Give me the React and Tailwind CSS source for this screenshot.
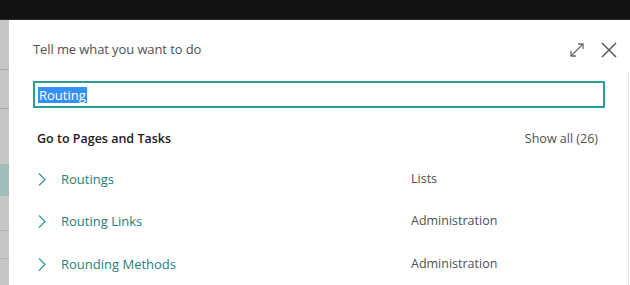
import React from "react";

const rows = [
  { name: "Routings", group: "Lists" },
  { name: "Routing Links", group: "Administration" },
  { name: "Rounding Methods", group: "Administration" },
];

const Chevron = () => (
  <svg width="10" height="15" viewBox="0 0 10 15" fill="none">
    <path d="M2 1.5 L8 7.5 L2 13.5" stroke="#3a9a9a" strokeWidth="1.3" />
  </svg>
);

const App = () => {
  return (
    <div
      className="w-[630px] h-[285px] flex flex-col overflow-hidden bg-white"
      style={{ fontFamily: '"Open Sans", "Noto Sans", sans-serif' }}
    >
      {/* Top bar */}
      <div className="h-[20px] shrink-0 bg-[#121212] border-b border-[#2a2a2a]" />

      <div className="flex-1 min-h-0 flex overflow-hidden">
        {/* Dimmed page behind */}
        <div className="w-[9px] shrink-0 bg-[#c6c6c6] flex flex-col">
          <div className="h-[50px] shrink-0 border-b border-[#a8a8a8]" />
          <div className="h-[39px] shrink-0 border-b border-[#a8a8a8]" />
          <div className="h-[55px] shrink-0" />
          <div className="h-[32px] shrink-0 bg-[#9fbdbc]" />
          <div className="h-[35px] shrink-0 border-b border-[#b0b0b0]" />
          <div className="h-[28px] shrink-0 border-b border-[#b0b0b0]" />
        </div>

        {/* Dialog */}
        <div className="flex-1 flex">
          <div className="flex-1 pl-[24px] pr-[10px]">
            <div className="h-[58px] flex items-center justify-between pt-[2px]">
              <span className="text-[13px] text-[#505050] tracking-[-0.1px]">
                Tell me what you want to do
              </span>
              <div className="flex items-center gap-[15px]">
                <svg width="16" height="16" viewBox="0 0 16 16" fill="none" stroke="#6a6a6a" strokeWidth="1.3">
                  <path d="M2 14 L14 2" />
                  <path d="M9 2 H14 V7" />
                  <path d="M2 9 V14 H7" />
                </svg>
                <svg width="18" height="18" viewBox="0 0 18 18" fill="none" stroke="#5a5a5a" strokeWidth="1.5">
                  <path d="M2 2 L16 16 M16 2 L2 16" />
                </svg>
              </div>
            </div>

            <div className="mt-[3px] mr-[13px] h-[27px] border-2 border-[#2a9d98] flex items-center pl-[3px]">
              <span className="bg-[#3391ff] text-white text-[13px] leading-[16px] px-[1px]">Routing</span>
            </div>

            <div className="mt-[21px] pl-[4px] flex items-center justify-between h-[20px]">
              <span className="text-[12.5px] font-semibold text-[#202020]">Go to Pages and Tasks</span>
              <span className="text-[12.5px] text-[#505050] mr-[20px]">Show all (26)</span>
            </div>

            <div className="mt-[9px] flex flex-col">
              {rows.map((r) => (
                <div key={r.name} className="h-[42.5px] shrink-0 flex items-center pl-[4px]">
                  <div className="w-[24px] flex items-center">
                    <Chevron />
                  </div>
                  <span className="w-[350px] text-[13px] text-[#22817f]">{r.name}</span>
                  <span className="text-[12.5px] text-[#505050]">{r.group}</span>
                </div>
              ))}
            </div>
          </div>
          <div className="w-[2px] mt-[52px] border-l border-[#e4e4e4]" />
        </div>
      </div>
    </div>
  );
};

export default App;
